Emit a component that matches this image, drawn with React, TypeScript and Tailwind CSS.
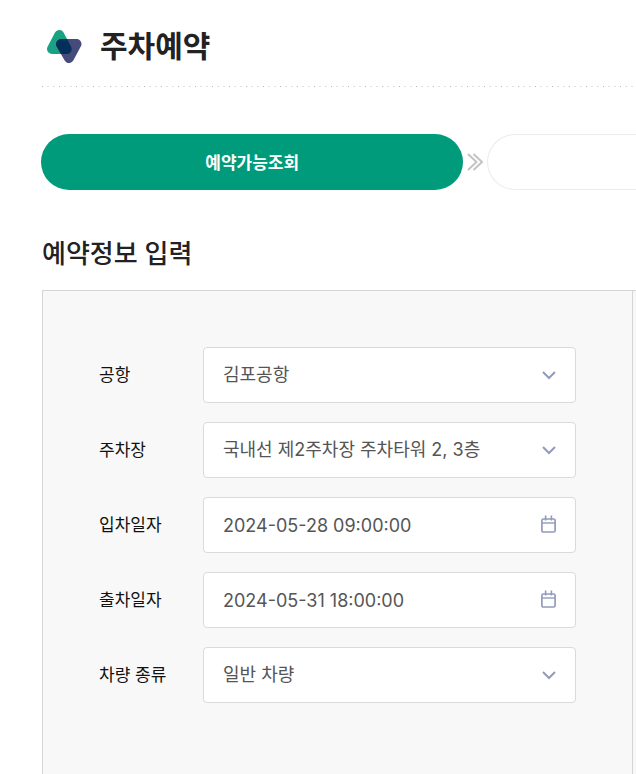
import type { ReactNode } from 'react';

type Field = {
  id: string;
  label: string;
  value: string;
  type: 'select' | 'date';
};

const fields: Field[] = [
  { id: 'airport', label: '공항', value: '김포공항', type: 'select' },
  { id: 'parking-lot', label: '주차장', value: '국내선 제2주차장 주차타워 2, 3층', type: 'select' },
  { id: 'entry-date', label: '입차일자', value: '2024-05-28 09:00:00', type: 'date' },
  { id: 'exit-date', label: '출차일자', value: '2024-05-31 18:00:00', type: 'date' },
  { id: 'car-type', label: '차량 종류', value: '일반 차량', type: 'select' },
];

const controlClass =
  'block h-14 w-full appearance-none rounded border border-[#dadada] bg-white pr-14 pl-[19px] text-lg text-[#555] outline-none focus:border-[#009b7a]';

function Logo() {
  return (
    <svg width="36" height="34" viewBox="0 0 36 34" className="shrink-0" strokeWidth="10" strokeLinejoin="round" aria-hidden="true">
      <mask id="logo-overlap" maskUnits="userSpaceOnUse" x="0" y="0" width="36" height="34">
        <path d="M13.3 5L20.7 19H6Z" fill="#fff" stroke="#fff" />
      </mask>
      <path d="M13.3 5L20.7 19H6Z" fill="#18a283" stroke="#18a283" />
      <path d="M15 14H30.5L23 28Z" fill="#454b7a" stroke="#454b7a" />
      <path d="M15 14H30.5L23 28Z" fill="#03305a" stroke="#03305a" mask="url(#logo-overlap)" />
    </svg>
  );
}

function ChevronIcon() {
  return (
    <svg width="14" height="9" viewBox="0 0 14 9" fill="none" stroke="#929bbd" strokeWidth="2" aria-hidden="true">
      <path d="M1 1L7 7L13 1" />
    </svg>
  );
}

function CalendarIcon() {
  return (
    <svg width="16" height="20" viewBox="0 0 16 20" fill="none" stroke="#929bbd" aria-hidden="true">
      <rect x="0.9" y="4" width="13.2" height="13" rx="1.5" strokeWidth="1.7" />
      <path d="M1 8H14" strokeWidth="1.4" />
      <path d="M4.6 0.5V5.5M10.4 0.5V5.5" strokeWidth="1.6" />
    </svg>
  );
}

function StepArrow() {
  return (
    <svg width="17" height="18" viewBox="0 0 17 18" fill="none" stroke="#c3c3c3" strokeWidth="2" aria-hidden="true">
      <path d="M1 1L9.5 9L1 17M6.5 1L15 9L6.5 17" />
    </svg>
  );
}

function FormRow({ id, label, children }: { id: string; label: string; children: ReactNode }) {
  return (
    <div className="flex items-center">
      <label htmlFor={id} className="w-[104px] shrink-0 pt-0.5 text-[17px] text-[#111]">
        {label}
      </label>
      <div className="relative flex-1">{children}</div>
    </div>
  );
}

export default function App() {
  return (
    <main className="flex min-h-screen flex-col overflow-hidden bg-white pl-[41px] font-[Inter,'Noto_Sans_CJK_KR',sans-serif] text-[#222]">
      <header className="flex h-[86px] items-center gap-[18px] pt-[7px] pl-[5px]">
        <Logo />
        <h1 className="text-[30px] font-bold">주차예약</h1>
      </header>
      <div className="ml-px h-px bg-[repeating-linear-gradient(to_right,#b8b8b8_0_1px,transparent_1px_5px,#e0e0e0_5px_7px,transparent_7px_11px,#e0e0e0_11px_13px,transparent_13px_17px)]" />

      {/* Steps */}
      <ol className="mt-[47px] flex items-center">
        <li className="flex h-14 w-[71%] items-center justify-center rounded-full bg-[#009b7a] pt-[3px] text-[17px] font-bold text-white">
          예약가능조회
        </li>
        <li className="flex w-6 shrink-0 justify-center" aria-hidden="true">
          <StepArrow />
        </li>
        <li className="h-14 flex-1 rounded-l-full border border-r-0 border-[#ebebeb]" />
      </ol>

      <h2 className="mt-[46px] pl-px text-[26px] leading-9 font-medium">예약정보 입력</h2>

      {/* Reservation form */}
      <div className="mt-[18px] ml-px flex flex-1 border-t border-l border-[#d5d5d5] bg-[#f8f8f8]">
        <form className="flex flex-1 flex-col gap-[19px] border-r border-[#d5d5d5] px-14 py-14">
          {fields.map((field) => (
            <FormRow key={field.id} id={field.id} label={field.label}>
              {field.type === 'select' ? (
                <select id={field.id} className={controlClass}>
                  <option>{field.value}</option>
                </select>
              ) : (
                <input id={field.id} type="text" defaultValue={field.value} className={controlClass} />
              )}
              <span className="pointer-events-none absolute inset-y-0 right-[19px] flex w-4 items-center justify-center">
                {field.type === 'select' ? <ChevronIcon /> : <CalendarIcon />}
              </span>
            </FormRow>
          ))}
        </form>
        <div className="w-[3px]" />
      </div>
    </main>
  );
}
